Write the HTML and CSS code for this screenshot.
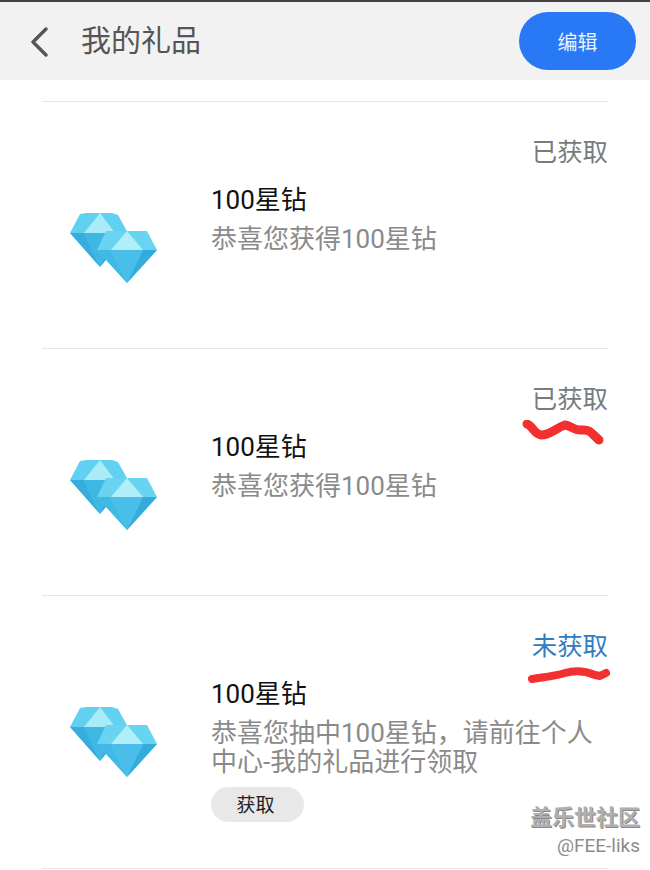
FILE: index.html
```html
<!DOCTYPE html>
<html lang="zh-CN">
<head>
    <meta charset="UTF-8">
    <meta name="viewport" content="width=device-width, initial-scale=1.0">
    <title>我的礼品</title>
    <link rel="stylesheet" href="styles.css">
</head>
<body>

    <svg class="defs" width="0" height="0">
        <symbol id="diamond" viewBox="0 0 90 75">
            <polygon points="11,4 17,3 43,3 49,5 59,23 31,57 1,23" fill="#62d0f0"/>
            <polygon points="1,23 15,23 31,57" fill="#36aedd"/>
            <polygon points="15,23 46,23 31,57" fill="#3fb7e3"/>
            <polygon points="46,23 59,23 31,57" fill="#33aada"/>
            <polygon points="31,3 15,23 46,23" fill="#a9ecf8"/>
            <polygon points="37,21 78,21 88,40 58,73 28,40" fill="#68d4f2"/>
            <polygon points="28,40 42,40 58,73" fill="#41b9e5"/>
            <polygon points="42,40 74,40 58,73" fill="#48bee8"/>
            <polygon points="74,40 88,40 58,73" fill="#33abdb"/>
            <polygon points="58,21 42,40 74,40" fill="#b0eff9"/>
        </symbol>
    </svg>

    <header class="topbar">
        <svg class="back" width="20" height="30" viewBox="0 0 20 30">
            <path d="M17 2 L4 15 L17 28" fill="none" stroke="#555" stroke-width="3.4" stroke-linecap="round" stroke-linejoin="round"/>
        </svg>
        <h1 class="title">我的礼品</h1>
        <button class="edit">编辑</button>
    </header>

    <main class="gift-list">
        <section class="gift">
            <div class="status">已获取</div>
            <div class="gift-row">
                <svg class="gem"><use href="#diamond"/></svg>
                <div class="gift-text">
                    <div class="gift-name">100星钻</div>
                    <div class="gift-desc">恭喜您获得100星钻</div>
                </div>
            </div>
        </section>

        <section class="gift">
            <div class="status">已获取</div>
            <svg class="scribble scribble-wave" width="84" height="26" viewBox="0 0 84 26">
                <path d="M7 4 C12 5 14 14 21 15 C30 15 36 8 45 5 C52 6 54 11 62 10 C70 9 72 14 79 20" fill="none" stroke="#f2302f" stroke-width="9" stroke-linecap="round" stroke-linejoin="round"/>
            </svg>
            <div class="gift-row">
                <svg class="gem"><use href="#diamond"/></svg>
                <div class="gift-text">
                    <div class="gift-name">100星钻</div>
                    <div class="gift-desc">恭喜您获得100星钻</div>
                </div>
            </div>
        </section>

        <section class="gift">
            <div class="status status-open">未获取</div>
            <svg class="scribble scribble-line" width="84" height="20" viewBox="0 0 84 20">
                <path d="M5 14 C18 12 28 11 38 8 C48 5 58 6 68 10 L73 11 L79 8" fill="none" stroke="#f2302f" stroke-width="8" stroke-linecap="round" stroke-linejoin="round"/>
            </svg>
            <div class="gift-row">
                <svg class="gem"><use href="#diamond"/></svg>
                <div class="gift-text">
                    <div class="gift-name">100星钻</div>
                    <div class="gift-desc">恭喜您抽中100星钻，请前往个人中心-我的礼品进行领取</div>
                    <button class="get">获取</button>
                </div>
            </div>
        </section>
    </main>

    <div class="watermark">
        <div class="wm-site">盖乐世社区</div>
        <div class="wm-user">@FEE-liks</div>
    </div>

</body>
</html>
```

FILE: styles.css
```css
* {
    margin: 0;
    padding: 0;
    box-sizing: border-box;
}

body {
    position: relative;
    height: 870px;
    overflow: hidden;
    background-color: #fff;
    font-family: Roboto, "Noto Sans CJK SC", "Noto Sans", sans-serif;
}

button {
    border: none;
    font-family: inherit;
}

.defs {
    display: block;
}

.topbar {
    display: flex;
    align-items: center;
    height: 80px;
    padding: 0 14px 0 29px;
    border-top: 2px solid #444;
    background-color: #f2f2f2;
}

.back {
    flex: none;
    margin: 2px 32px 0 0;
}

.title {
    flex: 1;
    margin-bottom: 1px;
    font-size: 30px;
    font-weight: 400;
    line-height: 40px;
    color: #555;
}

.edit {
    width: 117px;
    height: 58px;
    border-radius: 29px;
    background-color: #2979f6;
    color: #e8f4ff;
    font-size: 20px;
}

.gift-list {
    margin: 21px 42px 0;
    border-bottom: 1px solid #e6e6e6;
}

.gift {
    position: relative;
    min-height: 247px;
    padding-top: 32px;
    border-top: 1px solid #e6e6e6;
}

.status {
    font-size: 25.4px;
    line-height: 36px;
    text-align: right;
    color: #757c80;
}

.status-open {
    color: #2f7dc1;
}

.scribble {
    position: absolute;
    right: 4px;
}

.scribble-wave {
    top: 71px;
}

.scribble-line {
    top: 69px;
    right: -3px;
}

.gift-row {
    display: flex;
    margin-top: 13px;
}

.gem {
    flex: none;
    width: 90px;
    height: 75px;
    margin: 27px 52px 0 27px;
}

.gift-text {
    flex: 1;
    padding-top: 2px;
}

.gift-name {
    font-size: 26px;
    line-height: 30px;
    color: #111;
}

.gift-desc {
    margin-top: 10px;
    font-size: 26px;
    line-height: 29px;
    color: #8a8a8a;
}

.get {
    display: block;
    width: 93px;
    height: 35px;
    margin: 10px 0 46px;
    padding: 0 4px 3px 0;
    border-radius: 18px;
    background-color: #e8e8e8;
    color: #222;
    font-size: 19px;
}

.watermark {
    position: absolute;
    right: 10px;
    top: 804px;
    text-align: right;
    color: #8c8c8c;
}

.wm-site {
    font-size: 22px;
    line-height: 28px;
    font-weight: 700;
    color: #b0b0b0;
    text-shadow: 1px 1px 0 #8a8a8a;
}

.wm-user {
    margin-top: 1px;
    font-size: 19px;
    line-height: 26px;
}
```
